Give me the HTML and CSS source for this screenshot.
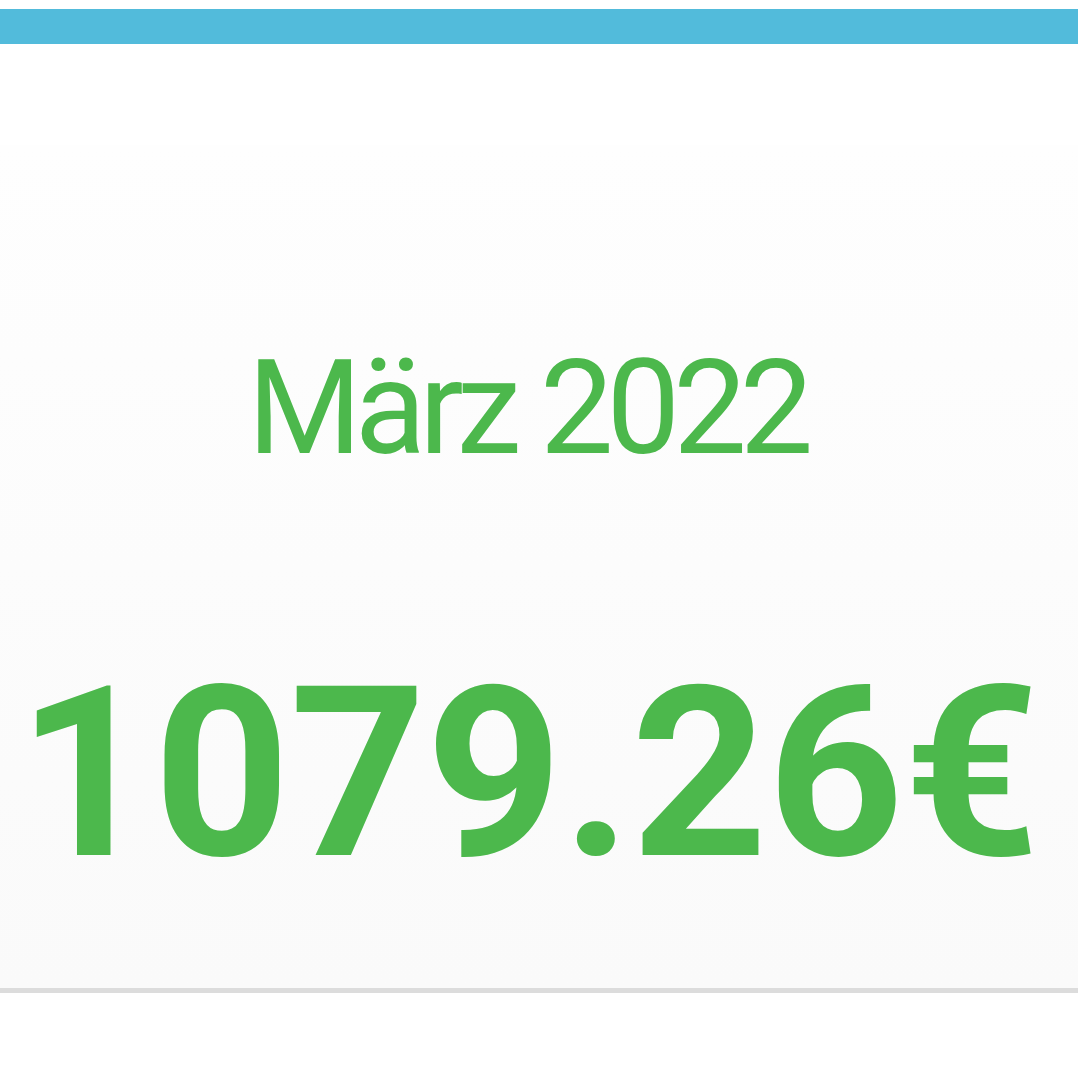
FILE: index.html
```html
<!DOCTYPE html>
<html lang="de">
  <head>
    <meta charset="UTF-8" />
    <meta name="viewport" content="width=device-width, initial-scale=1.0" />
    <title>Monatsbilanz</title>
    <link rel="stylesheet" href="styles.css">
  </head>
  <body>
    <div class="topbar"></div>
    <div class="card">
      <div class="month">März 2022</div>
      <div class="amount">1079.26€</div>
    </div>
  </body>
</html>
```

FILE: styles.css
```css
body {
  margin: 0;
  padding-top: 9px;
  background-color: #fff;
  font-family: Roboto, "Noto Sans", sans-serif;
}
.topbar {
  height: 35px;
  background-color: #52bbdb;
}
.card {
  margin-top: 101px;
  padding: 198px 0 95px;
  display: flex;
  flex-direction: column;
  align-items: center;
  gap: 181px;
  background: linear-gradient(#fefefe, #fafafa);
  border-bottom: 5px solid #dcdcdc;
  box-shadow: 0 10px 14px rgba(0, 0, 0, 0.03);
}
.month {
  font-size: 131px;
  line-height: 1;
  letter-spacing: -7px;
  color: #4cb84c;
  margin-right: 24px;
}
.amount {
  font-size: 238px;
  line-height: 1;
  letter-spacing: -0.3px;
  font-weight: 700;
  color: #4cb84c;
  margin-right: 21px;
}
```
